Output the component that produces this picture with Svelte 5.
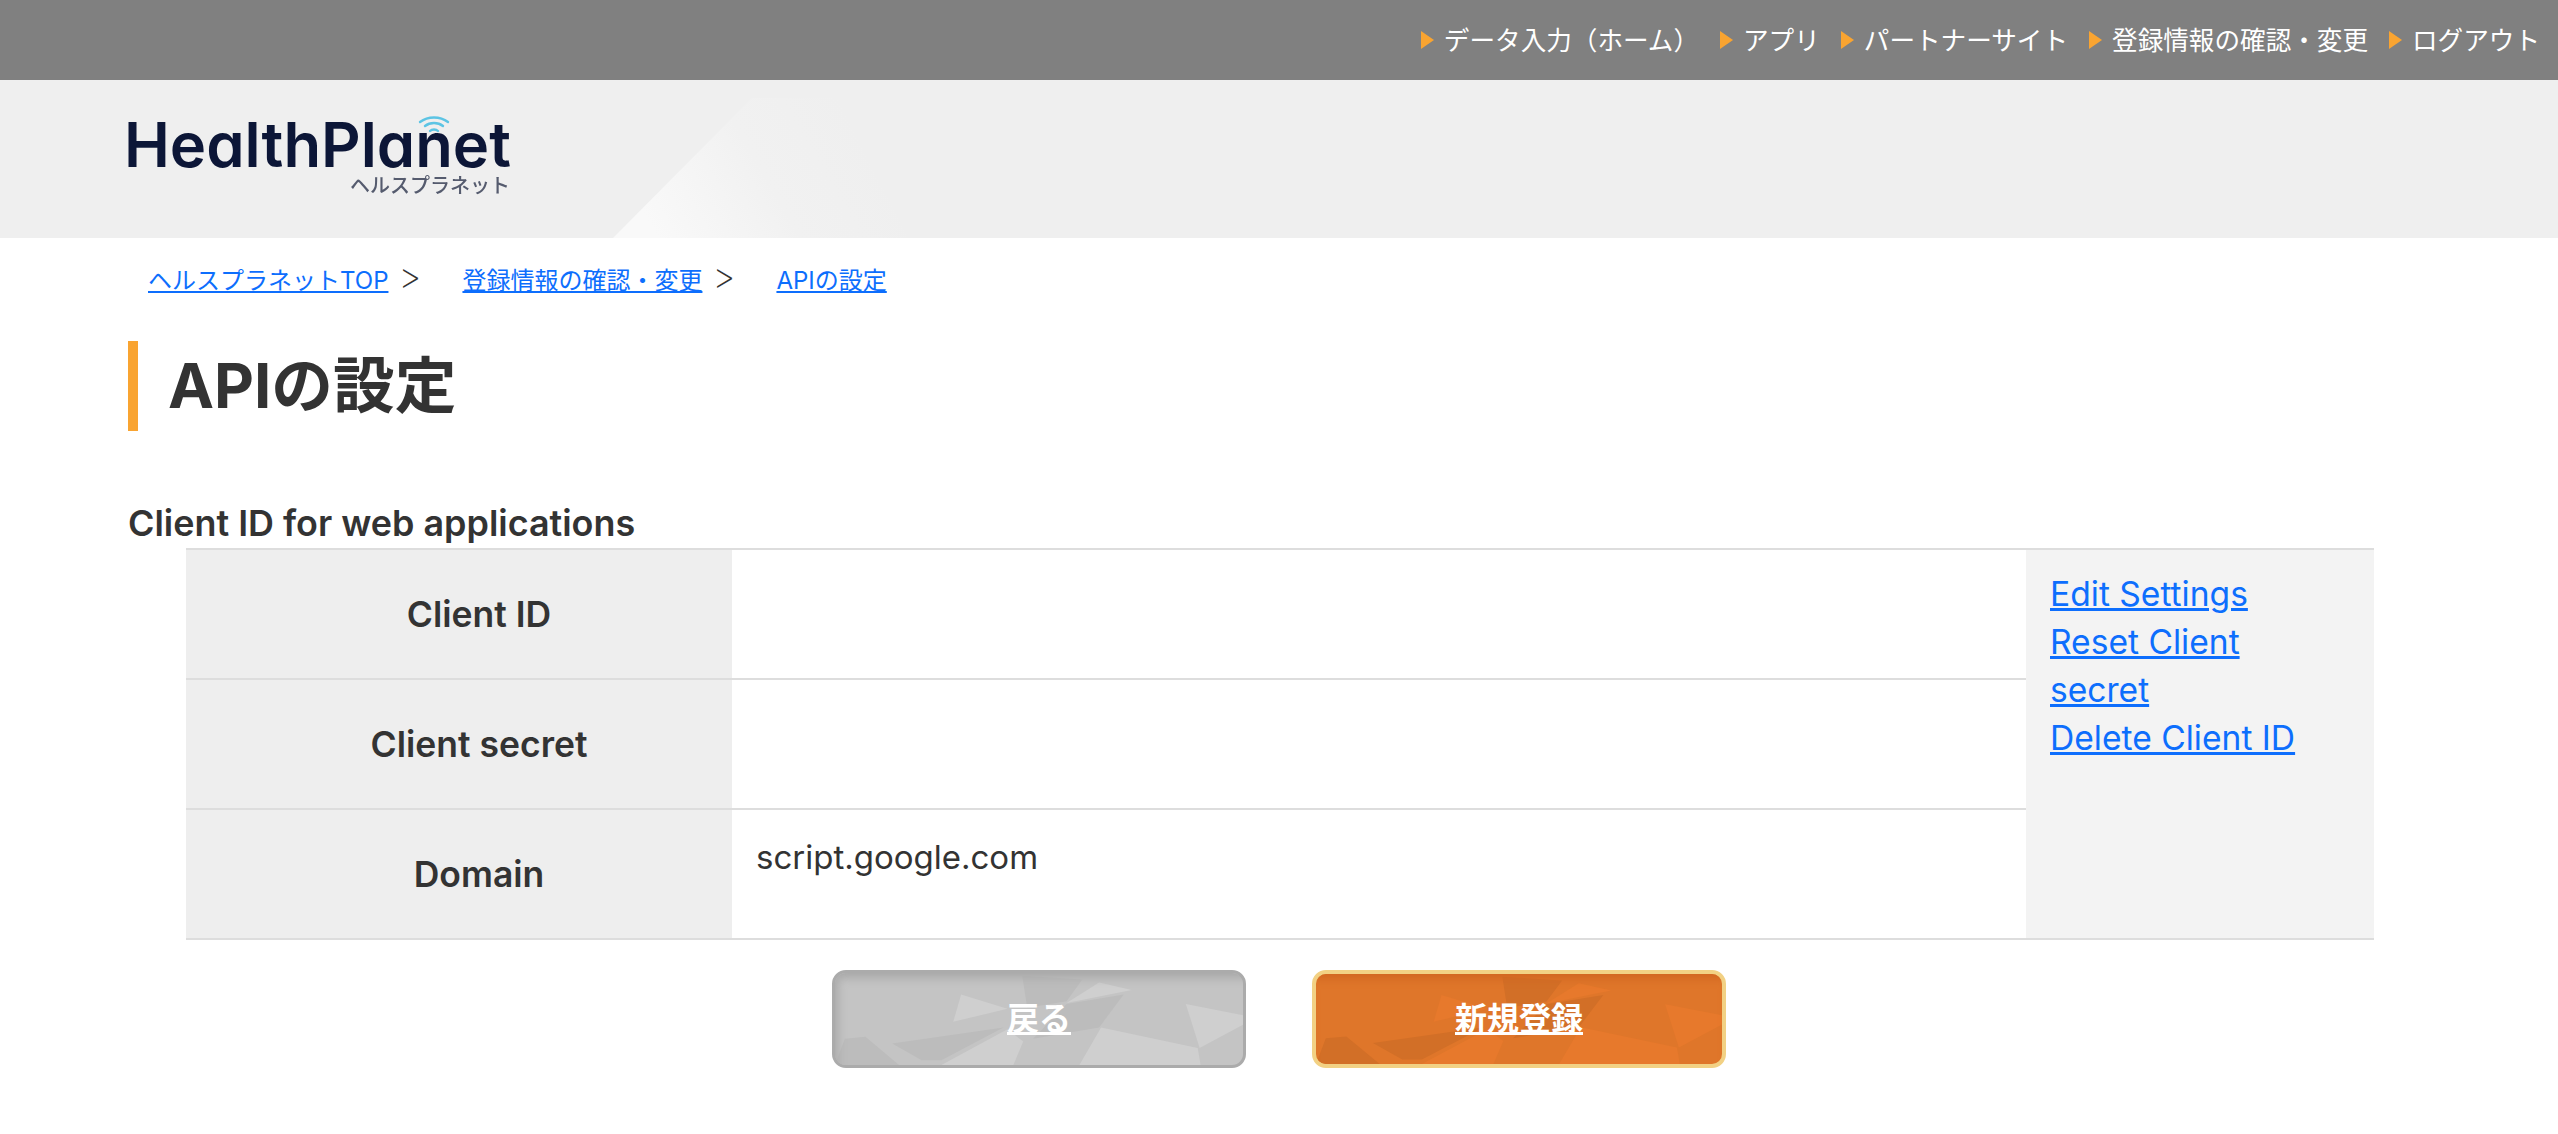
<script>
	const navItems = ['データ入力（ホーム）', 'アプリ', 'パートナーサイト', '登録情報の確認・変更', 'ログアウト'];
	const crumbs = ['ヘルスプラネットTOP', '登録情報の確認・変更', 'APIの設定'];
	const rows = [
		{ label: 'Client ID', value: '' },
		{ label: 'Client secret', value: '' },
		{ label: 'Domain', value: 'script.google.com' }
	];
	const actions = ['Edit Settings', 'Reset Client secret', 'Delete Client ID'];
	const lightFacets = [
		'M128 23 L175 38 L120 52Z',
		'M235 32 L268 10 L301 18Z',
		'M270 58 L368 80 L371 98 L248 98Z',
		'M356 33 L414 45 L414 55 L370 80Z',
		'M108 98 L175 60 L191 73 L181 98Z'
	];
	const darkFacets = [
		'M10 70 L31 68 L65 98 L0 98Z',
		'M58 75 L171 58 L108 93 L88 93Z',
		'M235 33 L293 23 L268 58 L201 70Z',
		'M190 3 L251 7 L235 30 L195 37Z'
	];
</script>

<nav class="topbar">
	{#each navItems as item}
		<a class="topbar__link" href="#top">{item}</a>
	{/each}
</nav>

<header class="brand">
	<div class="logo">
		<span class="logo__name">HealthPlanet</span>
		<svg class="logo__wifi" viewBox="0 0 32 17" fill="none" stroke="#5cc4e4" stroke-width="2.4" stroke-linecap="round">
			<path d="M2 6C10 0 22 0 30 6" />
			<path d="M7 10C12 6 20 6 25 10" />
			<path d="M12 15C14 13 18 13 20 15" />
		</svg>
		<span class="logo__kana">ヘルスプラネット</span>
	</div>
</header>

<main class="page">
	<ol class="crumbs">
		{#each crumbs as crumb, i}
			<li class="crumbs__item">
				<a href="#top">{crumb}</a>
				{#if i < crumbs.length - 1}<span class="crumbs__sep">&gt;</span>{/if}
			</li>
		{/each}
	</ol>

	<h1 class="title">APIの設定</h1>

	<h2 class="subtitle">Client ID for web applications</h2>

	<table class="clients">
		<tbody>
			{#each rows as row, i}
				<tr>
					<th>{row.label}</th>
					<td class="clients__value">{row.value}</td>
					{#if i === 0}
						<td class="clients__actions" rowspan="3">
							{#each actions as action}
								<a href="#top">{action}</a>
							{/each}
						</td>
					{/if}
				</tr>
			{/each}
		</tbody>
	</table>

	<div class="buttons">
		<a class="btn btn--back" href="#top">
			<svg class="btn__art" viewBox="0 0 414 98" preserveAspectRatio="none">
				{#each darkFacets as d}<path class="dark" {d} />{/each}
				{#each lightFacets as d}<path class="light" {d} />{/each}
			</svg>
			<span>戻る</span>
		</a>
		<a class="btn btn--new" href="#top">
			<svg class="btn__art" viewBox="0 0 414 98" preserveAspectRatio="none">
				{#each darkFacets as d}<path class="dark" {d} />{/each}
				{#each lightFacets as d}<path class="light" {d} />{/each}
			</svg>
			<span>新規登録</span>
		</a>
	</div>
</main>

<style>
	:global(body) {
		background: #fff;
		color: #333;
		font-family: Inter, 'Noto Sans CJK JP', sans-serif;
	}

	a {
		color: #0d6efd;
	}

	.topbar {
		display: flex;
		justify-content: flex-end;
		align-items: center;
		gap: 21px;
		height: 80px;
		padding: 0 18px 4px 0;
		box-sizing: border-box;
		background: #808080;
	}

	.topbar__link {
		display: flex;
		align-items: center;
		color: #fff;
		font-size: 25.6px;
		text-decoration: none;
		white-space: nowrap;
	}

	.topbar__link::before {
		content: '';
		width: 0;
		height: 0;
		margin: 4px 10px 0 0;
		border-left: 13px solid #f9a431;
		border-top: 9px solid transparent;
		border-bottom: 9px solid transparent;
	}

	.brand {
		position: relative;
		height: 158px;
		padding: 36px 0 0 128px;
		box-sizing: border-box;
		background: #efefef;
	}

	.brand::before {
		content: '';
		position: absolute;
		left: 613px;
		top: 18px;
		width: 295px;
		height: 140px;
		background: linear-gradient(60deg, #f9f9f9 12%, #f1f1f1 50%, #efefef 82%);
		clip-path: polygon(0 100%, 139px 0, 224px 0, 100% 100%);
	}

	.logo {
		position: relative;
		width: 382px;
		color: #0c1637;
		filter: blur(0.5px);
	}

	.logo__name {
		display: block;
		margin-left: -4px;
		font-family: Inter, sans-serif;
		font-feature-settings: 'cv11';
		font-weight: 600;
		font-size: 61.5px;
		line-height: 58px;
		white-space: nowrap;
	}

	.logo__wifi {
		position: absolute;
		left: 290px;
		top: 0;
		width: 32px;
		height: 17px;
	}

	.logo__kana {
		display: block;
		width: max-content;
		margin-left: auto;
		font-size: 20px;
		font-weight: 500;
		line-height: 24px;
		color: #555b6e;
	}

	.page {
		padding: 0 128px;
	}

	.crumbs {
		display: flex;
		gap: 41px;
		list-style: none;
		margin: 0;
		padding: 24px 0 0 20px;
		font-size: 24px;
		line-height: 38px;
	}

	.crumbs__sep {
		margin-left: 3px;
		font-size: 36px;
		font-weight: 200;
		line-height: 24px;
	}

	.title {
		margin: 41px 0 0;
		padding-left: 30px;
		border-left: 10px solid #f9a431;
		font-size: 61.7px;
		font-weight: 700;
		line-height: 90px;
	}

	.subtitle {
		margin: 68px 0 0;
		font-size: 35.9px;
		font-weight: 600;
		line-height: 49px;
	}

	.clients {
		width: 2188px;
		margin-left: 58px;
		border-collapse: collapse;
		table-layout: fixed;
		border-top: 2px solid #ddd;
		border-bottom: 2px solid #ddd;
		font-size: 33px;
	}

	.clients tr + tr {
		border-top: 2px solid #ddd;
	}

	.clients th {
		box-sizing: border-box;
		width: 546px;
		height: 130px;
		padding: 0 0 0 40px;
		background: #eee;
		font-size: 35.5px;
		font-weight: 600;
	}

	.clients__value {
		padding: 0 24px 34px;
	}

	.clients__value:empty {
		padding: 0;
	}

	.clients__actions {
		box-sizing: border-box;
		width: 348px;
		padding: 20px 40px 20px 24px;
		vertical-align: top;
		background: #f3f3f3;
		font-size: 33.6px;
		line-height: 48px;
	}

	.clients__actions a {
		display: block;
	}

	.buttons {
		display: flex;
		justify-content: center;
		gap: 66px;
		margin-top: 30px;
	}

	.btn {
		position: relative;
		display: flex;
		justify-content: center;
		align-items: center;
		width: 414px;
		height: 98px;
		box-sizing: border-box;
		overflow: hidden;
		border-radius: 14px;
		color: #fff;
		font-size: 32px;
		font-weight: 700;
	}

	.btn span {
		position: relative;
		top: -3px;
	}

	.btn__art {
		position: absolute;
		inset: 0;
		width: 100%;
		height: 100%;
		filter: blur(0.5px);
	}

	.btn--back {
		background: #c4c4c4;
		border: 3px solid #ababab;
	}

	.btn--back::after {
		content: '';
		position: absolute;
		inset: 0;
		box-shadow: inset 8px 10px 10px -5px #a8a8a8;
	}

	.btn--back .light {
		fill: #cfcfcf;
	}

	.btn--back .dark {
		fill: #bcbcbc;
	}

	.btn--new {
		background: #df762a;
		border: 4px solid #f2d184;
	}

	.btn--new::after {
		content: '';
		position: absolute;
		inset: 0;
		box-shadow: inset 0 10px 10px -6px #cf6420;
	}

	.btn--new .light {
		fill: #e7792c;
	}

	.btn--new .dark {
		fill: #d26f27;
	}
</style>
